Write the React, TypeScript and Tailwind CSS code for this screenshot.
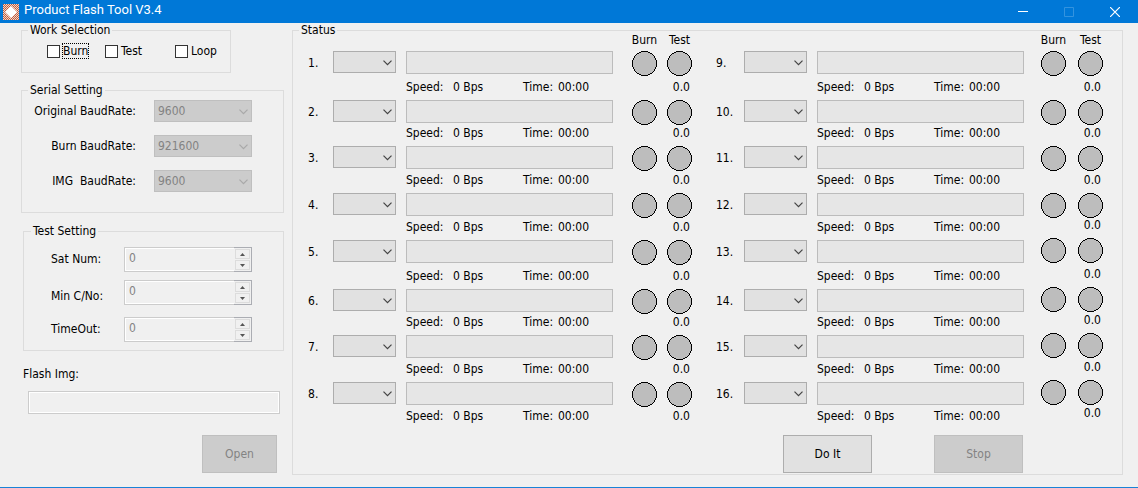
import { useState } from "react";

const OPTION_PORTS = ["", "COM1", "COM2", "COM3", "COM4"];
const BAUD_RATES = ["9600", "115200", "921600"];

function Group({ title, className, legendClass = "ml-[6px]", children }: { title: string; className: string; legendClass?: string; children: React.ReactNode }) {
  return (
    <fieldset className={`min-w-0 border border-[#dcdcdc] ${className}`}>
      <legend className={`px-[2px] leading-[15px] ${legendClass}`}>{title}</legend>
      {children}
    </fieldset>
  );
}

function Chevron({ className }: { className: string }) {
  return (
    <svg viewBox="0 0 9 6" className={`pointer-events-none absolute right-[4px] top-[9px] h-[6px] w-[9px] ${className}`} fill="none" strokeWidth="1.2">
      <path d="M0.5 0.7 L4.5 4.7 L8.5 0.7" stroke="currentColor" />
    </svg>
  );
}

function CheckItem({ label, focused, className }: { label: string; focused?: boolean; className: string }) {
  return (
    <label className={`flex items-center ${className}`}>
      <input type="checkbox" className="size-[13px] appearance-none border border-[#333] bg-white checked:bg-[#0078d7]" />
      <span className={focused ? "ml-[2px] border border-dotted border-black leading-[14px]" : "ml-[3px] leading-4"}>{label}</span>
    </label>
  );
}

function BaudRow({ label, value }: { label: string; value: string }) {
  const id = label.replace(/\s+/g, "-").toLowerCase();
  return (
    <div className="flex items-center justify-between">
      <label htmlFor={id} className="flex-1 whitespace-pre pr-[18px] text-right">{label}</label>
      <div className="relative w-[98px]">
        <select id={id} disabled defaultValue={value} className="block h-[22px] w-full appearance-none border border-[#bfbfbf] bg-[#ccc] pl-[3px] text-[#838383] opacity-100">
          {BAUD_RATES.map((r) => (
            <option key={r}>{r}</option>
          ))}
        </select>
        <Chevron className="text-[#a8a8a8]" />
      </div>
    </div>
  );
}

function Spinner({ id }: { id: string }) {
  return (
    <div className="flex h-[25px] min-w-0 border border-[#ccc] bg-white">
      <input id={id} disabled defaultValue="0" className="m-px mr-0 min-w-0 flex-1 bg-[#f0f0f0] pb-[3px] pl-[3px] text-[#838383]" />
      <div className="-my-px -mr-px flex w-[18px] shrink-0 flex-col gap-px border border-l-0 border-[#abadb3] bg-[#f0f0f0] p-px">
        <button disabled aria-label={`Increase ${id}`} className="flex flex-1 items-center justify-center border border-[#dcdcdc]">
          <svg viewBox="0 0 5 3" className="h-[3px] w-[5px]"><path d="M0 3 L2.5 0 L5 3 Z" fill="#555" /></svg>
        </button>
        <button disabled aria-label={`Decrease ${id}`} className="flex flex-1 items-center justify-center border border-[#dcdcdc]">
          <svg viewBox="0 0 5 3" className="h-[3px] w-[5px]"><path d="M0 0 L2.5 3 L5 0 Z" fill="#555" /></svg>
        </button>
      </div>
    </div>
  );
}

function Channel({ n, numberClass }: { n: number; numberClass: string }) {
  return (
    <div className="flex">
      <label htmlFor={`port-${n}`} className={`shrink-0 pt-[4px] ${numberClass}`}>{n}.</label>
      <div className="relative h-[22px] w-[63px] shrink-0">
        <select id={`port-${n}`} className="block h-full w-full appearance-none border border-[#adadad] bg-[#e1e1e1] pl-[3px]">
          {OPTION_PORTS.map((p) => (
            <option key={p}>{p}</option>
          ))}
        </select>
        <Chevron className="text-[#444]" />
      </div>
      <div className="ml-[10px] flex min-w-0 flex-1 flex-col justify-between">
        <div role="progressbar" aria-label={`Channel ${n}`} aria-valuenow={0} className="h-[23px] border border-[#bcbcbc] bg-[#e6e6e6]" />
        <div className="mb-[5px] flex whitespace-nowrap">
          <span className="w-[47px]">Speed:</span>
          <span className="w-[70px]">0 Bps</span>
          <span className="w-[35px]">Time:</span>
          <span>00:00</span>
        </div>
      </div>
    </div>
  );
}

function Lamp() {
  return (
    <svg viewBox="0 0 25 25" className="size-[25px]" shapeRendering="crispEdges">
      <circle cx="12.5" cy="12.5" r="12" fill="#bdbdbd" stroke="#000" />
    </svg>
  );
}

function Lamps({ className, gap }: { className: string; gap: string }) {
  return (
    <div className={`grid ${className}`}>
      {Array.from({ length: 8 }, (_, i) => (
        <div key={i} className="flex flex-col justify-between">
          <div className={`flex ${gap}`}>
            <Lamp />
            <Lamp />
          </div>
          <div className="-mt-1 mb-[5px] pr-[2px] text-right">0.0</div>
        </div>
      ))}
    </div>
  );
}

function LampHeads({ gap }: { gap: string }) {
  return (
    <div className={`flex ${gap}`}>
      <span className="flex w-[25px] justify-center">Burn</span>
      <span className="flex w-[25px] justify-center">Test</span>
    </div>
  );
}

const CHANNEL_ROWS = "grid grid-rows-[49px_46px_47px_47px_49px_46px_47px_47px]";

export default function App() {
  const [running] = useState(false);
  return (
    <div className="flex min-h-screen flex-col border-b border-[#1883d7] bg-[#f0f0f0] font-['DejaVu_Sans_Condensed','DejaVu_Sans',sans-serif] text-[12px] leading-4 text-black">
      <header className="flex h-[23px] items-center bg-[#0078d7] text-white">
        <svg viewBox="0 0 16 16" className="ml-[3px] size-4">
          <defs>
            <pattern id="weave" width="2" height="2" patternUnits="userSpaceOnUse">
              <rect width="2" height="2" fill="#f3d3c6" />
              <rect width="1" height="1" fill="#b9583a" />
              <rect x="1" y="1" width="1" height="1" fill="#c4694c" />
            </pattern>
          </defs>
          <rect width="16" height="16" fill="url(#weave)" />
          <path d="M8 2 L14 8 L8 14 L2 8 Z" fill="#fff" />
        </svg>
        <h1 className="ml-[5px] flex-1 pb-[3px] font-[Roboto,sans-serif] text-[13px] leading-4">Product Flash Tool V3.4</h1>
        <button aria-label="Minimize" className="flex w-[46px] justify-center">
          <svg viewBox="0 0 10 10" className="size-[10px]"><path d="M0 4.5 H10" stroke="#fff" /></svg>
        </button>
        <button aria-label="Maximize" disabled className="flex w-[46px] justify-center">
          <svg viewBox="0 0 10 10" className="size-[10px]"><path d="M0.5 0.5 H9.5 V9.5 H0.5 Z" fill="none" stroke="#3393df" /></svg>
        </button>
        <button aria-label="Close" className="flex w-[46px] justify-center">
          <svg viewBox="0 0 10 10" className="size-[10px]"><path d="M0 0 L10 10 M10 0 L0 10" stroke="#fff" strokeWidth="1.2" /></svg>
        </button>
      </header>

      <main className="flex flex-1">
        <section className="flex w-[292px] shrink-0 flex-col pl-[21px] pr-2">
          <Group title="Work Selection" className="h-[50px] w-[210px]">
            <div className="flex pl-[25px] pt-[5px]">
              <CheckItem label="Burn" focused className="w-[58px]" />
              <CheckItem label="Test" className="w-[70px]" />
              <CheckItem label="Loop" className="" />
            </div>
          </Group>
          <Group title="Serial Setting" className="mt-[10px] h-[130px]">
            <div className="flex flex-col gap-[13px] pr-[31px] pt-[2px]">
              <BaudRow label="Original BaudRate:" value="9600" />
              <BaudRow label="Burn BaudRate:" value="921600" />
              <BaudRow label="IMG  BaudRate:" value="9600" />
            </div>
          </Group>
          <Group title="Test Setting" className="ml-[2px] mt-[11px] h-[127px]" legendClass="ml-[7px]">
            <div className="flex pl-[27px] pr-[31px] pt-[8px]">
              <div className="grid w-[73px] shrink-0 grid-rows-[37px_33px_25px] whitespace-nowrap pt-[4px]">
                <label htmlFor="sat">Sat Num:</label>
                <label htmlFor="cno">Min C/No:</label>
                <label htmlFor="timeout">TimeOut:</label>
              </div>
              <div className="grid min-w-0 flex-1 grid-cols-1 grid-rows-[33px_37px_25px]">
                <Spinner id="sat" />
                <Spinner id="cno" />
                <Spinner id="timeout" />
              </div>
            </div>
          </Group>
          <label htmlFor="img" className="ml-[2px] mt-[15px]">Flash Img:</label>
          <div className="ml-[7px] mr-[4px] mt-[9px] border border-[#ccc]">
            <input id="img" disabled className="block h-[21px] w-full border border-white bg-[#f0f0f0] px-1" />
          </div>
          <button disabled className="mr-[7px] mt-[21px] h-[38px] w-[75px] self-end border border-[#bfbfbf] bg-[#ccc] text-[#838383]">Open</button>
        </section>

        <section className="flex-1 pb-3 pr-[15px]">
          <Group title="Status" className="h-full">
            <div className="grid grid-cols-[305fr_19px_60px_24px_308fr_17px_62px] pl-[15px] pr-[19px]">
              <div className="col-start-3 -mt-[6px] h-[19px]"><LampHeads gap="gap-[10px]" /></div>
              <div className="col-start-7 -mt-[6px] h-[19px]"><LampHeads gap="gap-[12px]" /></div>
              <div className={`col-start-1 ${CHANNEL_ROWS}`}>
                {Array.from({ length: 8 }, (_, i) => (
                  <Channel key={i} n={i + 1} numberClass="w-[25px]" />
                ))}
              </div>
              <Lamps className="col-start-3 content-start grid-rows-[49px_46px_47px_47px_49px_46px_47px_47px]" gap="gap-[10px]" />
              <div className={`col-start-5 ${CHANNEL_ROWS}`}>
                {Array.from({ length: 8 }, (_, i) => (
                  <Channel key={i} n={i + 9} numberClass="w-[28px]" />
                ))}
              </div>
              <Lamps className="col-start-7 content-start grid-rows-[49px_46px_47px_45px_49px_46px_47px_46px]" gap="gap-[12px]" />
            </div>
            <div className="mr-[99px] mt-[6px] flex justify-end gap-[62px]">
              <button className="h-[38px] w-[89px] border border-[#adadad] bg-[#e1e1e1]">Do It</button>
              <button disabled={!running} className="h-[38px] w-[89px] border border-[#bfbfbf] bg-[#ccc] text-[#838383]">Stop</button>
            </div>
          </Group>
        </section>
      </main>
    </div>
  );
}
